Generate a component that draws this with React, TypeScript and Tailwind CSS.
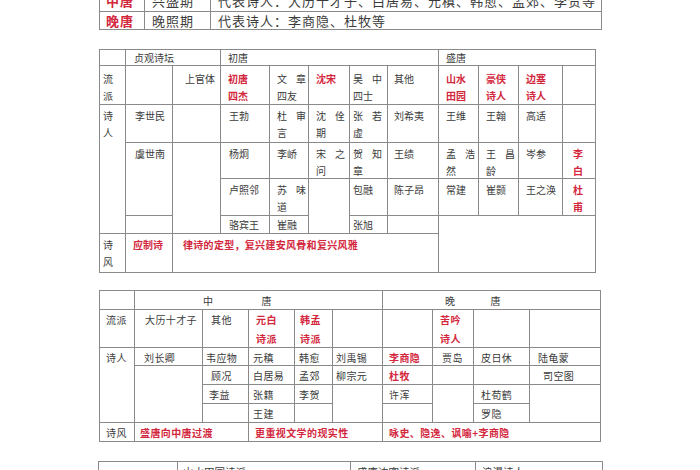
import React from "react";

const R = "text-[#d3273d] font-bold";

function C({ children, className = "" }: { children?: React.ReactNode; className?: string }) {
  return <div className={`border-r border-b border-[#8a8a8a] ${className}`}>{children}</div>;
}

// two chars spread across the cell width, like justified text in the scan
function Sp({ a, b }: { a: string; b: string }) {
  return (
    <div className="flex w-[29px] justify-between">
      <span>{a}</span>
      <span>{b}</span>
    </div>
  );
}

function Stack({ chars }: { chars: string }) {
  return (
    <>
      {chars.split("").map((c, i) => (
        <div key={i}>{c}</div>
      ))}
    </>
  );
}

export default function App() {
  return (
    <div className="h-[470px] w-[700px] overflow-hidden bg-white font-['Noto_Sans_CJK_SC',sans-serif] text-[#3b3b3b]">
      <div className="flex flex-col items-start">
        {/* 分期表（上方被截断） */}
        <div className="-mt-[10px] ml-[99px] grid grid-cols-[45px_66px_391px] grid-rows-[21px_18px] border-l border-t border-[#8a8a8a] text-[13px] leading-[18px] tracking-[1px]">
          <C className={`pl-[6px] pt-[1px] ${R}`}>中唐</C>
          <C className="pl-[7px] pt-[1px]">兴盛期</C>
          <C className="pl-[7px] pt-[1px]">代表诗人：大历十才子、白居易、元稹、韩愈、孟郊、李贺等</C>
          <C className={`pl-[6px] ${R}`}>晚唐</C>
          <C className="pl-[7px]">晚照期</C>
          <C className="pl-[7px]">代表诗人：李商隐、杜牧等</C>
        </div>

        {/* 初唐 / 盛唐 */}
        <div className="ml-[99px] mt-[19px] grid grid-cols-[26px_47px_48px_49px_39px_41px_38px_51px_40px_40px_44px_33px] grid-rows-[16px_39px_38px_36px_37px_18px_39px] border-l border-t border-[#8a8a8a] text-[10px] leading-[17px]">
          <C />
          <C className="col-span-2 pl-[8px] leading-[15px]">贞观诗坛</C>
          <C className="col-span-5 pl-[7px] leading-[15px]">初唐</C>
          <C className="col-span-4 pl-[7px] leading-[15px]">盛唐</C>

          <C className="pl-[3px] pt-[4px]"><Stack chars="流派" /></C>
          <C />
          <C className="pl-[12px] pt-[4px]">上官体</C>
          <C className={`pl-[7px] pt-[4px] ${R}`}>初唐<br />四杰</C>
          <C className="pl-[7px] pt-[4px]"><Sp a="文" b="章" />四友</C>
          <C className={`pl-[7px] pt-[4px] ${R}`}>沈宋</C>
          <C className="pl-[3px] pt-[4px]"><Sp a="吴" b="中" />四士</C>
          <C className="pl-[6px] pt-[4px]">其他</C>
          <C className={`pl-[7px] pt-[4px] ${R}`}>山水<br />田园</C>
          <C className={`pl-[7px] pt-[4px] ${R}`}>豪侠<br />诗人</C>
          <C className={`pl-[7px] pt-[4px] ${R}`}>边塞<br />诗人</C>
          <C />

          <C className="row-span-4 pl-[3px] pt-[2px]"><Stack chars="诗人" /></C>
          <C className="pl-[9px] pt-[2px]">李世民</C>
          <C />
          <C className="pl-[8px] pt-[2px]">王勃</C>
          <C className="pl-[7px] pt-[2px]"><Sp a="杜" b="审" />言</C>
          <C className="pl-[7px] pt-[2px]"><Sp a="沈" b="佺" />期</C>
          <C className="pl-[3px] pt-[2px]"><Sp a="张" b="若" />虚</C>
          <C className="pl-[6px] pt-[2px]">刘希夷</C>
          <C className="pl-[7px] pt-[2px]">王维</C>
          <C className="pl-[7px] pt-[2px]">王翰</C>
          <C className="pl-[7px] pt-[2px]">高适</C>
          <C />

          <C className="row-span-2 pl-[9px] pt-[2px]">虞世南</C>
          <C className="row-span-3" />
          <C className="pl-[8px] pt-[2px]">杨炯</C>
          <C className="pl-[7px] pt-[2px]">李峤</C>
          <C className="pl-[7px] pt-[2px]"><Sp a="宋" b="之" />问</C>
          <C className="pl-[3px] pt-[2px]"><Sp a="贺" b="知" />章</C>
          <C className="pl-[6px] pt-[2px]">王绩</C>
          <C className="pl-[7px] pt-[2px]"><Sp a="孟" b="浩" />然</C>
          <C className="pl-[7px] pt-[2px]"><Sp a="王" b="昌" />龄</C>
          <C className="pl-[7px] pt-[2px]">岑参</C>
          <C className={`pl-[10px] pt-[2px] ${R}`}><Stack chars="李白" /></C>

          <C className="pl-[8px] pt-[2px]">卢照邻</C>
          <C className="pl-[7px] pt-[2px]"><Sp a="苏" b="味" />道</C>
          <C className="row-span-2" />
          <C className="pl-[3px] pt-[2px]">包融</C>
          <C className="pl-[6px] pt-[2px]">陈子昂</C>
          <C className="pl-[7px] pt-[2px]">常建</C>
          <C className="pl-[7px] pt-[2px]">崔颢</C>
          <C className="pl-[7px] pt-[2px]">王之涣</C>
          <C className={`pl-[10px] pt-[2px] ${R}`}><Stack chars="杜甫" /></C>

          <C />
          <C className="pl-[8px] leading-[17px]">骆宾王</C>
          <C className="pl-[7px] leading-[17px]">崔融</C>
          <C className="pl-[3px] leading-[17px]">张旭</C>
          <C />
          <C className="col-span-4 row-span-2" />

          <C className="pl-[3px] pt-[2px]"><Stack chars="诗风" /></C>
          <C className={`pl-[7px] pt-[2px] ${R}`}>应制诗</C>
          <C className={`col-span-6 pl-[10px] pt-[2px] tracking-[0.3px] ${R}`}>律诗的定型，复兴建安风骨和复兴风雅</C>
        </div>

        {/* 中唐 / 晚唐 */}
        <div className="ml-[99px] mt-[17px] grid grid-cols-[35px_68px_46px_46px_38px_50px_50px_41px_56px_71px] grid-rows-[19px_38px_18px_19px_19px_19px_19px] border-l border-t border-[#8a8a8a] text-[10px] leading-[19px] tracking-[0.4px]">
          <C />
          <C className="col-span-5 flex gap-[48px] pl-[68px]"><span>中</span><span>唐</span></C>
          <C className="col-span-4 flex gap-[35px] pl-[62px]"><span>晚</span><span>唐</span></C>

          <C className="pl-[6px]">流派</C>
          <C className="pl-[10px]">大历十才子</C>
          <C className="pl-[8px]">其他</C>
          <C className={`pl-[7px] ${R}`}>元白<br />诗派</C>
          <C className={`pl-[5px] ${R}`}>韩孟<br />诗派</C>
          <C />
          <C />
          <C className={`pl-[7px] ${R}`}>苦吟<br />诗人</C>
          <C />
          <C />

          <C className="row-span-4 pl-[6px]">诗人</C>
          <C className="pl-[9px]">刘长卿</C>
          <C className="pl-[3px]">韦应物</C>
          <C className="pl-[4px]">元稹</C>
          <C className="pl-[4px]">韩愈</C>
          <C className="pl-[3px]">刘禹锡</C>
          <C className={`pl-[6px] ${R}`}>李商隐</C>
          <C className="pl-[9px]">贾岛</C>
          <C className="pl-[7px]">皮日休</C>
          <C className="pl-[8px]">陆龟蒙</C>

          <C className="row-span-3" />
          <C className="pl-[8px]">顾况</C>
          <C className="pl-[4px]">白居易</C>
          <C className="pl-[4px]">孟郊</C>
          <C className="pl-[3px]">柳宗元</C>
          <C className={`pl-[6px] ${R}`}>杜牧</C>
          <C />
          <C />
          <C className="pl-[13px]">司空图</C>

          <C className="pl-[6px]">李益</C>
          <C className="pl-[4px]">张籍</C>
          <C className="pl-[4px]">李贺</C>
          <C className="row-span-2" />
          <C className="pl-[6px]">许浑</C>
          <C className="row-span-2" />
          <C className="pl-[7px]">杜荀鹤</C>
          <C className="row-span-2" />

          <C />
          <C className="pl-[4px]">王建</C>
          <C />
          <C />
          <C className="pl-[7px]">罗隐</C>

          <C className="pl-[6px]">诗风</C>
          <C className={`col-span-2 pl-[5px] ${R}`}>盛唐向中唐过渡</C>
          <C className={`col-span-3 pl-[6px] ${R}`}>更重视文学的现实性</C>
          <C className={`col-span-4 pl-[6px] ${R}`}>咏史、隐逸、讽喻+李商隐</C>
        </div>

        {/* 下一张表（底部被截断） */}
        <div className="ml-[98px] mt-[19px] grid grid-cols-[79px_173px_125px_127px] grid-rows-[30px] border-l border-t border-[#8a8a8a] text-[10.5px] leading-[16px]">
          <C />
          <C className="pl-[5px] pt-[2px]">山水田园诗派</C>
          <C className="pl-[6px] pt-[2px]">盛唐边塞诗派</C>
          <C className="pl-[6px] pt-[2px]">浪漫诗人</C>
        </div>
      </div>
    </div>
  );
}
